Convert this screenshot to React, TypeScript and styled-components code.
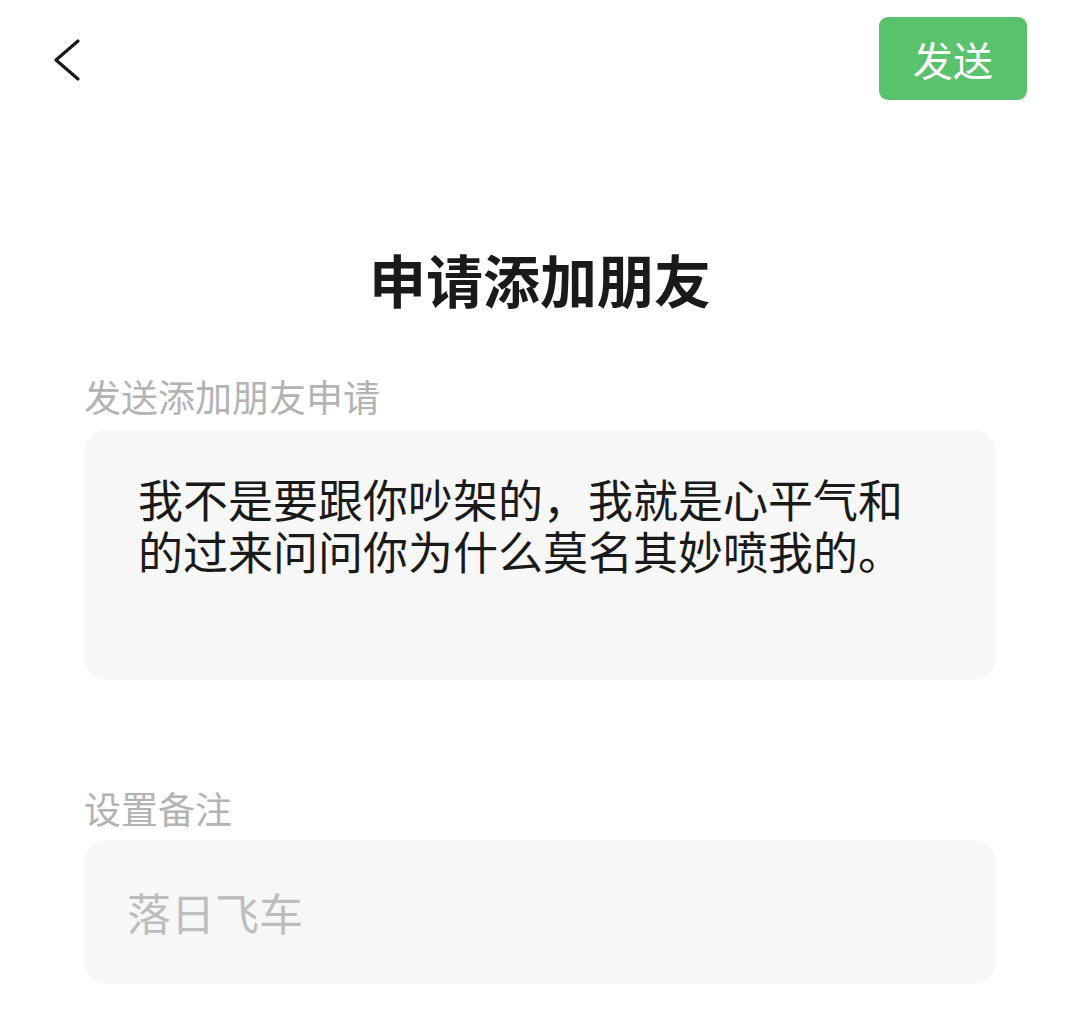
import React, { FC } from "react";
import styled, { createGlobalStyle } from "styled-components";

const GlobalStyle = createGlobalStyle`
  html, body {
    margin: 0;
    padding: 0;
    background: #ffffff;
  }
  body {
    font-family: "Noto Sans CJK SC", "Noto Sans", sans-serif;
  }
`;

const Page = styled.div`
  width: 1080px;
  height: 1015px;
  background: #ffffff;
  overflow: hidden;
`;

const Header = styled.div`
  height: 100px;
  display: flex;
  justify-content: space-between;
  align-items: flex-start;
  padding: 0 53px 0 52px;
`;

const BackButton = styled.div`
  margin-top: 37px;
  width: 30px;
  height: 46px;
  display: flex;
  align-items: center;
`;

const SendButton = styled.div`
  margin-top: 17px;
  width: 148px;
  height: 83px;
  border-radius: 9px;
  background: #5ac26c;
  color: #ffffff;
  font-size: 40px;
  display: flex;
  align-items: center;
  justify-content: center;
`;

const Title = styled.h1`
  margin: 148px 0 0;
  text-align: center;
  font-size: 57px;
  line-height: 60px;
  font-weight: 700;
  color: #1a1a1a;
`;

const Form = styled.div`
  padding: 0 84px;
`;

const Label = styled.div<{ $top: number; $gap: number }>`
  margin-top: ${(p) => p.$top}px;
  margin-bottom: ${(p) => p.$gap}px;
  font-size: 37px;
  line-height: 40px;
  color: #b3b3b3;
`;

const Field = styled.div<{ $height: number; $padX: number }>`
  height: ${(p) => p.$height}px;
  box-sizing: border-box;
  border-radius: 22px;
  background: #f7f7f7;
  padding: 0 ${(p) => p.$padX}px;
`;

const Message = styled.div`
  padding-top: 43px;
`;

const MessageLine = styled.div`
  height: 52px;
  font-size: 45px;
  line-height: 52px;
  color: #1a1a1a;
  white-space: nowrap;
`;

const RemarkText = styled.div`
  height: 100%;
  display: flex;
  align-items: center;
  font-size: 44px;
  color: #bdbdbd;
`;

const messageLines = [
  "我不是要跟你吵架的，我就是心平气和",
  "的过来问问你为什么莫名其妙喷我的。",
];

const App: FC = () => {
  return (
    <Page>
      <GlobalStyle />
      <Header>
        <BackButton>
          <svg width="30" height="46" viewBox="0 0 30 46">
            <polyline
              points="26,4 4,23 26,42"
              fill="none"
              stroke="#1a1a1a"
              strokeWidth="3.2"
              strokeLinecap="round"
              strokeLinejoin="round"
            />
          </svg>
        </BackButton>
        <SendButton>发送</SendButton>
      </Header>
      <Title>申请添加朋友</Title>
      <Form>
        <Label $top={68} $gap={14}>
          发送添加朋友申请
        </Label>
        <Field $height={250} $padX={54}>
          <Message>
            {messageLines.map((line) => (
              <MessageLine key={line}>{line}</MessageLine>
            ))}
          </Message>
        </Field>
        <Label $top={108} $gap={12}>
          设置备注
        </Label>
        <Field $height={144} $padX={43}>
          <RemarkText>落日飞车</RemarkText>
        </Field>
      </Form>
    </Page>
  );
};

export default App;
